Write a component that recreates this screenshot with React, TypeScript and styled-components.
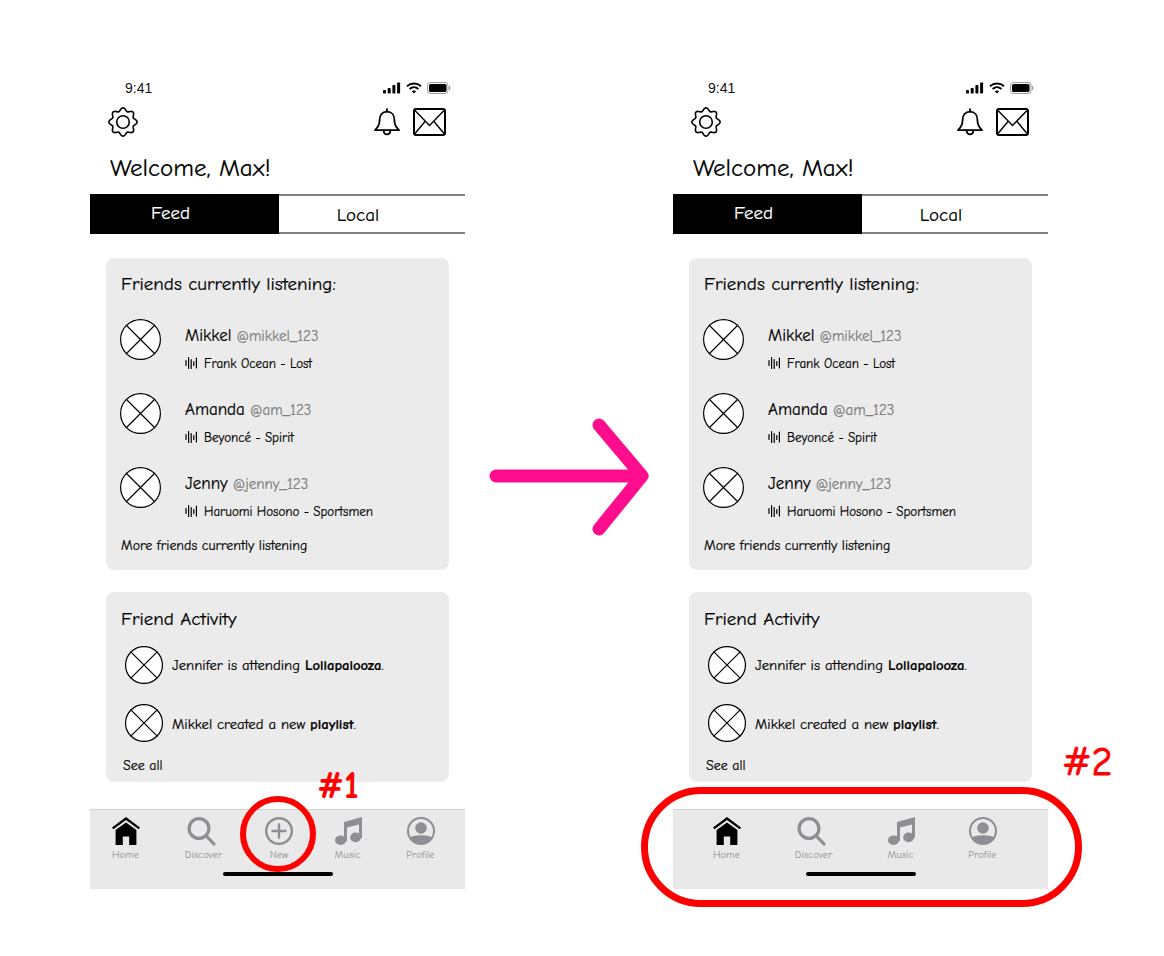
import styled, { createGlobalStyle } from "styled-components";

const sketchFont = `"Comic Sans MS", "Comic Neue", cursive`;

const GlobalStyle = createGlobalStyle`
  html, body {
    margin: 0;
    padding: 0;
    background: #fff;
    font-family: ${sketchFont};
  }
`;

const Page = styled.div`
  display: flex;
  width: 1164px;
  height: 956px;
  padding: 78px 0 0 90px;
  box-sizing: border-box;
  overflow: hidden;
  -webkit-text-stroke: 0.2px currentColor;
`;

const Phone = styled.div`
  position: relative;
  width: 375px;
  flex: none;
`;

const ArrowSlot = styled.div`
  width: 208px;
  flex: none;
  padding: 340px 0 0 24px;
  box-sizing: border-box;
`;

const StatusBar = styled.div`
  display: flex;
  justify-content: space-between;
  align-items: center;
  height: 20px;
  padding: 0 14px 0 35px;
  font-family: "Liberation Sans", sans-serif;
  font-size: 14px;
  color: #111;
  -webkit-text-stroke: 0;
`;

const StatusIcons = styled.div`
  display: flex;
  align-items: center;
  gap: 5px;
`;

const HeadBar = styled.div`
  display: flex;
  justify-content: space-between;
  align-items: center;
  height: 30px;
  margin-top: 9px;
  padding: 0 19px 0 18px;
`;

const HeadRight = styled.div`
  display: flex;
  align-items: center;
  gap: 13px;
`;

const Welcome = styled.div`
  height: 26px;
  margin-top: 18px;
  padding-left: 20px;
  font-size: 25px;
  line-height: 26px;
  color: #000;
`;

const Tabs = styled.div`
  display: flex;
  height: 40px;
  margin-top: 13px;
  border-top: 2px solid #808080;
  border-bottom: 2px solid #808080;
  box-sizing: border-box;
`;

const Tab = styled.div<{ $active?: boolean }>`
  display: flex;
  align-items: center;
  justify-content: center;
  height: ${(p) => (p.$active ? "40px" : "36px")};
  margin-top: ${(p) => (p.$active ? "-2px" : "0")};
  width: ${(p) => (p.$active ? "189px" : "186px")};
  padding: ${(p) => (p.$active ? "0 28px 2px 0" : "2px 28px 0 0")};
  box-sizing: border-box;
  background: ${(p) => (p.$active ? "#000" : "#fff")};
  color: ${(p) => (p.$active ? "#fff" : "#000")};
  font-size: 19px;
`;

const Card = styled.div<{ $top: number; $pad: number }>`
  width: 343px;
  margin: ${(p) => p.$top}px 0 0 16px;
  padding: ${(p) => p.$pad}px 15px 0;
  box-sizing: border-box;
  background: #ebebeb;
  border-radius: 8px;
`;

const CardTitle = styled.div`
  height: 24px;
  font-size: 19px;
  line-height: 22px;
  white-space: nowrap;
  color: #000;
`;

const FriendList = styled.div`
  display: flex;
  flex-direction: column;
  gap: 33px;
  margin: 22px 0 0 -1px;
`;

const FriendRow = styled.div`
  display: flex;
  height: 41px;
  gap: 24px;
`;

const FriendText = styled.div`
  margin-top: 7px;
`;

const NameLine = styled.div`
  height: 20px;
  font-size: 17px;
  line-height: 20px;
  white-space: nowrap;
  color: #000;
`;

const Handle = styled.span`
  margin-left: 5px;
  font-size: 15px;
  color: #808080;
`;

const SongLine = styled.div`
  display: flex;
  align-items: center;
  gap: 6px;
  height: 20px;
  margin-top: 7px;
  font-size: 13px;
  white-space: nowrap;
  color: #000;
`;

const SmallLink = styled.div<{ $top: number; $left?: number; $bottom: number }>`
  height: 20px;
  margin: ${(p) => p.$top}px 0 0 ${(p) => p.$left ?? 0}px;
  padding-bottom: ${(p) => p.$bottom}px;
  font-size: 13.9px;
  line-height: 18px;
  white-space: nowrap;
  color: #000;
`;

const ActivityList = styled.div`
  display: flex;
  flex-direction: column;
  gap: 20px;
  margin: 14px 0 0 4px;
`;

const ActivityRow = styled.div`
  display: flex;
  align-items: center;
  gap: 9px;
  height: 38px;
  font-size: 14.7px;
  white-space: nowrap;
  color: #000;

  b {
    font-weight: 700;
  }
`;

const ActivityText = styled.span<{ $drop?: number }>`
  padding-top: ${(p) => p.$drop ?? 0}px;
`;

const Nav = styled.div`
  display: flex;
  flex-direction: column;
  height: 80px;
  margin-top: 27px;
  border-top: 1px solid #d2d2d2;
  box-sizing: border-box;
  background: #e9e9e9;
`;

const NavItems = styled.div<{ $left: number; $gap: number }>`
  display: flex;
  gap: ${(p) => p.$gap}px;
  padding: 6px 0 0 ${(p) => p.$left}px;
`;

const NavItem = styled.div<{ $width: number; $active?: boolean }>`
  display: flex;
  flex-direction: column;
  align-items: center;
  width: ${(p) => p.$width}px;
  color: ${(p) => (p.$active ? "#000" : "#8e8e93")};
`;

const NavIcon = styled.div`
  display: flex;
  align-items: center;
  justify-content: center;
  width: 30px;
  height: 30px;
`;

const NavLabel = styled.div`
  margin-top: 2px;
  font-size: 10.5px;
  line-height: 14px;
  white-space: nowrap;
  color: #8e8e93;
  -webkit-text-stroke: 0;
`;

const HomeBar = styled.div`
  width: 110px;
  height: 4px;
  margin: 10px auto 0;
  border-radius: 2px;
  background: #000;
`;

const RedRing = styled.div`
  position: absolute;
  left: 150px;
  top: 718px;
  width: 76px;
  height: 76px;
  box-sizing: border-box;
  border: 6px solid #ff0000;
  border-radius: 50%;
`;

const RedOval = styled.div`
  position: absolute;
  left: -32px;
  top: 709px;
  width: 441px;
  height: 120px;
  box-sizing: border-box;
  border: 7px solid #ff0000;
  border-radius: 60px;
`;

const RedTag = styled.div<{ $left: number; $top: number; $size: number; $bold?: boolean }>`
  position: absolute;
  left: ${(p) => p.$left}px;
  top: ${(p) => p.$top}px;
  font-size: ${(p) => p.$size}px;
  font-weight: ${(p) => (p.$bold ? 700 : 400)};
  line-height: 40px;
  color: #ff0000;
  -webkit-text-stroke: ${(p) => (p.$bold ? "0" : "0.9px")} #ff0000;
`;

function Avatar({ size }: { size: number }) {
  const near = 14.64;
  const far = 85.36;
  return (
    <svg width={size} height={size} viewBox="0 0 100 100" style={{ flex: "none" }}>
      <circle cx="50" cy="50" r="48.5" fill="#fff" stroke="#000" strokeWidth={120 / size} />
      <path d={`M${near} ${near}L${far} ${far}M${far} ${near}L${near} ${far}`} stroke="#000" strokeWidth={120 / size} />
    </svg>
  );
}

function SignalIcon() {
  return (
    <svg width="18" height="12" viewBox="0 0 18 12" fill="#000">
      <rect x="0" y="8" width="3" height="3.5" rx="0.8" />
      <rect x="4.7" y="6" width="3" height="5.5" rx="0.8" />
      <rect x="9.4" y="3" width="3" height="8.5" rx="0.8" />
      <rect x="14.1" y="0.5" width="3" height="11" rx="0.8" />
    </svg>
  );
}

function WifiIcon() {
  return (
    <svg width="16" height="12" viewBox="0 0 16 12" fill="none" stroke="#000" strokeWidth="2">
      <path d="M1 4.2C5 .6 11 .6 15 4.2" />
      <path d="M3.6 7C6.2 4.7 9.8 4.7 12.4 7" />
      <path d="M8 11.5L5.8 9.2C7 8.2 9 8.2 10.2 9.2Z" fill="#000" stroke="none" />
    </svg>
  );
}

function BatteryIcon() {
  return (
    <svg width="24" height="12" viewBox="0 0 24 12">
      <rect x="0.5" y="0.5" width="20.5" height="11" rx="3" fill="none" stroke="#999" />
      <rect x="2" y="2" width="17.5" height="8" rx="1.6" fill="#000" />
      <path d="M22 4v4c.9-.3 1.5-1.1 1.5-2s-.6-1.7-1.5-2Z" fill="#999" />
    </svg>
  );
}

// wavy cog outline, one lobe per 45 degrees
const cogPath = Array.from({ length: 144 }, (_, i) => {
  const a = (i / 144) * Math.PI * 2;
  const r = 12.6 + 1.5 * Math.cos(8 * a);
  const x = 15 + r * Math.sin(a);
  const y = 15 - r * Math.cos(a);
  return `${i === 0 ? "M" : "L"}${x.toFixed(2)} ${y.toFixed(2)}`;
}).join("") + "Z";

function GearIcon() {
  return (
    <svg width="30" height="30" viewBox="0 0 30 30" fill="none" stroke="#000" strokeWidth="1.6" strokeLinejoin="round">
      <circle cx="15" cy="15" r="6.3" />
      <path d={cogPath} />
    </svg>
  );
}

function BellIcon() {
  return (
    <svg width="26" height="28" viewBox="0 0 26 28" fill="none" stroke="#000" strokeWidth="1.8" strokeLinejoin="round" strokeLinecap="round">
      <path d="M13 1.2v2.4" />
      <path d="M13 3.6c-4.8 0-7.4 3.6-7.4 8.3 0 5-1.4 7.2-4.6 10.3h24c-3.2-3.1-4.6-5.3-4.6-10.3 0-4.7-2.6-8.3-7.4-8.3Z" />
      <path d="M9.6 22.4c.2 2.3 1.6 4 3.4 4s3.2-1.7 3.4-4" />
    </svg>
  );
}

function MailIcon() {
  return (
    <svg width="33" height="28" viewBox="0 0 33 28" fill="none" stroke="#000" strokeLinejoin="round">
      <rect x="1" y="1" width="31" height="26" rx="2" strokeWidth="2" />
      <path d="M2 2.5l14.5 15L31 2.5M2 25.5l10-12M31 25.5l-10-12" strokeWidth="1.4" />
    </svg>
  );
}

function WaveIcon() {
  return (
    <svg width="13" height="14" viewBox="0 0 13 14" stroke="#000" strokeWidth="1.2" strokeLinecap="round" style={{ flex: "none" }}>
      <path d="M1 4.5v5M3.6 1.5v11M6.2 3.5v9M8.8 5.5v4M11.4 2v10" />
    </svg>
  );
}

function HomeIcon() {
  return (
    <svg width="28" height="28" viewBox="0 0 28 28" fill="currentColor">
      <path d="M14 0L0 10.4l1.4 1.8L14 3l12.6 9.2 1.4-1.8Z" />
      <path d="M14 5.4L3.6 13v15h7.2v-8.6h6.4V28h7.2V13Z" />
    </svg>
  );
}

function SearchIcon() {
  return (
    <svg width="28" height="28" viewBox="2.5 0 28 28" fill="none" stroke="currentColor" style={{ overflow: "visible" }}>
      <circle cx="11.5" cy="11.5" r="9.9" strokeWidth="3.2" />
      <path d="M18.7 18.8L26.5 27" strokeWidth="3.2" strokeLinecap="round" />
    </svg>
  );
}

function PlusIcon() {
  return (
    <svg width="28" height="28" viewBox="0 0 28 28" fill="none" stroke="currentColor" strokeWidth="2.4">
      <circle cx="14" cy="14" r="12.8" />
      <path d="M14 7.5v13M7.5 14h13" strokeLinecap="round" />
    </svg>
  );
}

function MusicIcon() {
  return (
    <svg width="28" height="28" viewBox="-1 0 28 28" fill="currentColor">
      <path d="M9 5L27 0v21h-3V7.4L12 10.6V24H9Z" />
      <ellipse cx="5.6" cy="23.2" rx="5.6" ry="4.8" />
      <ellipse cx="20.6" cy="20.4" rx="5.4" ry="4.8" />
    </svg>
  );
}

function ProfileIcon() {
  return (
    <svg width="28" height="28" viewBox="0 0 28 28">
      <defs>
        <clipPath id="profile-clip">
          <circle cx="14" cy="14" r="13" />
        </clipPath>
      </defs>
      <circle cx="14" cy="14" r="13" fill="none" stroke="currentColor" strokeWidth="2" />
      <circle cx="14" cy="11" r="5.8" fill="currentColor" />
      <path d="M0 28V22.6c2.5-3.4 7.6-4.4 14-4.4s11.5 1 14 4.4V28Z" fill="currentColor" clipPath="url(#profile-clip)" />
    </svg>
  );
}

const friends = [
  { name: "Mikkel", handle: "@mikkel_123", song: "Frank Ocean - Lost" },
  { name: "Amanda", handle: "@am_123", song: "Beyoncé - Spirit" },
  { name: "Jenny", handle: "@jenny_123", song: "Haruomi Hosono - Sportsmen" },
];

function Screen({ showNew }: { showNew: boolean }) {
  const left = showNew ? 23 : 41;
  const gap = showNew ? 46 : 55;
  return (
    <>
      <StatusBar>
        <span>9:41</span>
        <StatusIcons>
          <SignalIcon />
          <WifiIcon />
          <BatteryIcon />
        </StatusIcons>
      </StatusBar>
      <HeadBar>
        <GearIcon />
        <HeadRight>
          <BellIcon />
          <MailIcon />
        </HeadRight>
      </HeadBar>
      <Welcome>Welcome, Max!</Welcome>
      <Tabs>
        <Tab $active>Feed</Tab>
        <Tab>Local</Tab>
      </Tabs>
      <Card $top={24} $pad={15}>
        <CardTitle>Friends currently listening:</CardTitle>
        <FriendList>
          {friends.map((f) => (
            <FriendRow key={f.name}>
              <Avatar size={41} />
              <FriendText>
                <NameLine>
                  {f.name}
                  <Handle>{f.handle}</Handle>
                </NameLine>
                <SongLine>
                  <WaveIcon />
                  {f.song}
                </SongLine>
              </FriendText>
            </FriendRow>
          ))}
        </FriendList>
        <SmallLink $top={28} $bottom={14}>More friends currently listening</SmallLink>
      </Card>
      <Card $top={22} $pad={16}>
        <CardTitle>Friend Activity</CardTitle>
        <ActivityList>
          <ActivityRow>
            <Avatar size={38} />
            <ActivityText>
              Jennifer is attending <b>Lollapalooza</b>.
            </ActivityText>
          </ActivityRow>
          <ActivityRow>
            <Avatar size={38} />
            <ActivityText $drop={3}>
              Mikkel created a new <b>playlist</b>.
            </ActivityText>
          </ActivityRow>
        </ActivityList>
        <SmallLink $top={14} $left={2} $bottom={6}>See all</SmallLink>
      </Card>
      <Nav>
        <NavItems $left={left} $gap={gap}>
          <NavItem $width={25} $active>
            <NavIcon><HomeIcon /></NavIcon>
            <NavLabel>Home</NavLabel>
          </NavItem>
          <NavItem $width={39}>
            <NavIcon><SearchIcon /></NavIcon>
            <NavLabel>Discover</NavLabel>
          </NavItem>
          {showNew && (
            <NavItem $width={20}>
              <NavIcon><PlusIcon /></NavIcon>
              <NavLabel>New</NavLabel>
            </NavItem>
          )}
          <NavItem $width={25}>
            <NavIcon><MusicIcon /></NavIcon>
            <NavLabel>Music</NavLabel>
          </NavItem>
          <NavItem $width={29}>
            <NavIcon><ProfileIcon /></NavIcon>
            <NavLabel>Profile</NavLabel>
          </NavItem>
        </NavItems>
        <HomeBar />
      </Nav>
    </>
  );
}

export default function App() {
  return (
    <>
      <GlobalStyle />
      <Page>
        <Phone>
          <Screen showNew />
          <RedRing />
          <RedTag $left={227} $top={688} $size={38} $bold>#1</RedTag>
        </Phone>
        <ArrowSlot>
          <svg width="162" height="120" viewBox="0 0 162 120" fill="none" stroke="#ff0d8c" strokeWidth="13" strokeLinecap="round" strokeLinejoin="round">
            <path d="M7 58H153M110 7L153 58L110 111" />
          </svg>
        </ArrowSlot>
        <Phone>
          <Screen showNew={false} />
          <RedOval />
          <RedTag $left={389} $top={664} $size={40}>#2</RedTag>
        </Phone>
      </Page>
    </>
  );
}
